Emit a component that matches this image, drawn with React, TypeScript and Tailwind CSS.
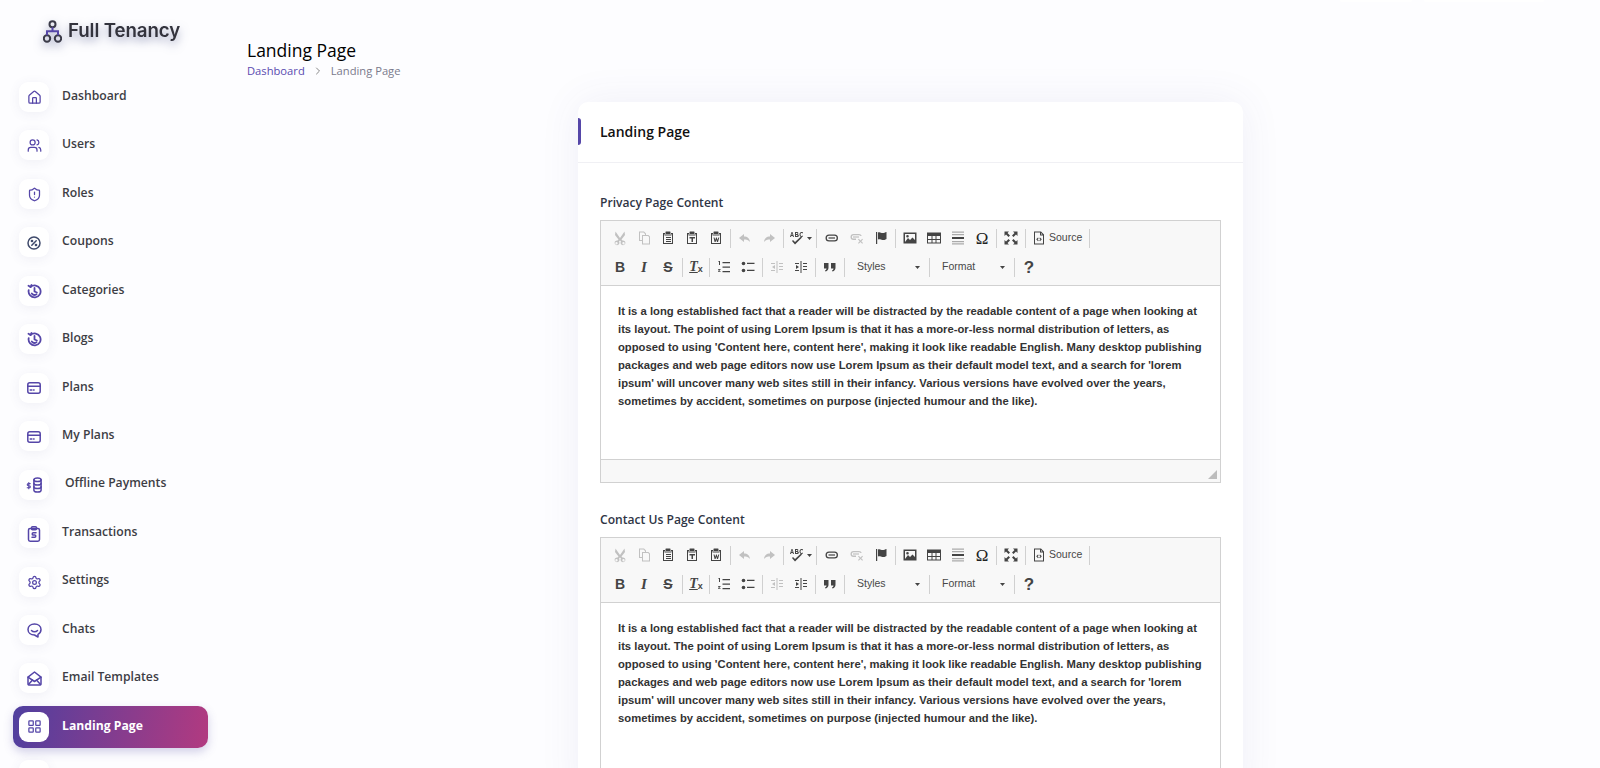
import React from "react";
import { Home, Users, ShieldAlert, Settings, LayoutGrid, ChevronRight } from "lucide-react";

const purple = "#5546a8";

const PercentIcon = () => (
  <svg width="14" height="14" viewBox="0 0 14 14" fill="none" stroke="#3f4a6b" strokeWidth="1.5" strokeLinecap="round">
    <circle cx="7" cy="7" r="6" />
    <path d="M9.200 4.800 4.800 9.200" />
    <circle cx="5" cy="5" r=".6" />
    <circle cx="9" cy="9" r=".6" />
  </svg>
);

const HistoryIcon = () => (
  <svg width="15" height="15" viewBox="0 0 15 15" fill="none" stroke={purple} strokeWidth="1.800" strokeLinecap="round" strokeLinejoin="round">
    <path d="M3.500 3a6 6 0 1 1-1.800 3.200" />
    <path d="M1.500 1.800 3.500 3 4.500 1" />
    <path d="M7.500 4v3.500l2.400 1" />
    <path d="M4.800 9.500c1 1.400 3 1.800 4.700.8" />
  </svg>
);

const CardIcon = () => (
  <svg width="14" height="12" viewBox="0 0 14 12" fill="none" stroke={purple} strokeWidth="1.500" strokeLinecap="round">
    <rect x=".8" y=".8" width="12.400" height="10.400" rx="2" />
    <path d="M.8 4.300h12.400" />
    <path d="M3.200 8h1.600M6.500 8h.6" />
  </svg>
);

const CoinsIcon = () => (
  <svg width="18" height="16" viewBox="0 0 18 16" fill="none" stroke={purple} strokeWidth="1.500" strokeLinecap="round">
    <ellipse cx="12.500" cy="2.800" rx="3.600" ry="1.800" />
    <path d="M8.900 2.800v10.400c0 1 1.600 1.800 3.600 1.800s3.600-.8 3.600-1.800V2.800" />
    <path d="M8.900 6.200c0 1 1.600 1.800 3.600 1.800s3.600-.8 3.600-1.800" />
    <path d="M8.900 9.700c0 1 1.600 1.800 3.600 1.800s3.600-.8 3.600-1.800" />
    <path d="M5.200 6.600H3.300a1 1 0 0 0 0 2.100h1a1 1 0 0 1 0 2.100H2.200M3.800 5.600v6.200" strokeWidth="1.100" />
  </svg>
);

const ClipboardDollar = () => (
  <svg width="14" height="16" viewBox="0 0 14 16" fill="none" stroke={purple} strokeWidth="1.500" strokeLinecap="round" strokeLinejoin="round">
    <rect x="1.500" y="2.500" width="11" height="12.700" rx="1.600" />
    <rect x="4.500" y=".8" width="5" height="3" rx="1" />
    <path d="M9 6.800H6.300a1.100 1.100 0 0 0 0 2.200h1.400a1.100 1.100 0 0 1 0 2.200H5" />
  </svg>
);

const ChatIcon = () => (
  <svg width="15" height="15" viewBox="0 0 15 15" fill="none" stroke={purple} strokeWidth="1.500" strokeLinecap="round" strokeLinejoin="round">
    <path d="M7.500 1C3.800 1 1 3.300 1 6.500S3.800 12 7.500 12l3.500 2v-2.700c1.900-1 3-2.700 3-4.800C14 3.300 11.200 1 7.500 1z" />
    <path d="M4.500 7.500c1.500 1.700 4.500 1.700 6 0" />
  </svg>
);

const MailIcon = () => (
  <svg width="15" height="15" viewBox="0 0 15 15" fill="none" stroke={purple} strokeWidth="1.500" strokeLinejoin="round" strokeLinecap="round">
    <path d="M1 6.200 7.500 1 14 6.200V13a1 1 0 0 1-1 1H2a1 1 0 0 1-1-1z" />
    <path d="M1 6.200 7.500 10.500 14 6.200" />
    <path d="M1.500 13.500 5.500 9M13.500 13.500 9.500 9" />
  </svg>
);

const icon = (I: typeof Home) => <I size={15} color={purple} strokeWidth={2} />;

const navItems: { label: string; icon: React.ReactNode; extra?: string }[] = [
  { label: "Dashboard", icon: icon(Home) },
  { label: "Users", icon: icon(Users) },
  { label: "Roles", icon: icon(ShieldAlert) },
  { label: "Coupons", icon: <PercentIcon /> },
  { label: "Categories", icon: <HistoryIcon /> },
  { label: "Blogs", icon: <HistoryIcon /> },
  { label: "Plans", icon: <CardIcon /> },
  { label: "My Plans", icon: <CardIcon /> },
  { label: "Offline Payments", icon: <CoinsIcon />, extra: "ml-[3px]" },
  { label: "Transactions", icon: <ClipboardDollar /> },
  { label: "Settings", icon: icon(Settings) },
  { label: "Chats", icon: <ChatIcon /> },
  { label: "Email Templates", icon: <MailIcon /> },
];

function NavRow({ label, icon, extra }: { label: string; icon: React.ReactNode; extra?: string }) {
  return (
    <div className="mb-[6.46px] flex h-[42px] items-center gap-[13px] pl-[6px]">
      <div className="flex h-[30px] w-[30px] items-center justify-center rounded-[9px] bg-white pt-[1px] shadow-[0_2px_12px_rgba(80,80,130,0.08)]">
        {icon}
      </div>
      <span className={`pb-[2px] text-[12.200px] font-semibold text-[#3d3d45] ${extra ?? ""}`}>{label}</span>
    </div>
  );
}

function Sidebar() {
  return (
    <aside className="w-[228px] shrink-0 font-['Open_Sans',sans-serif]">
      <div className="flex h-[76px] items-start pl-[43px] pt-[17px]">
        <div className="flex items-center gap-[6px] drop-shadow-[0_4px_5px_rgba(50,60,120,0.5)]">
          <svg width="19" height="23" viewBox="0 0 19 23" fill="none" stroke="#3a3a48" strokeWidth="2">
            <circle cx="9.500" cy="4.200" r="3" />
            <circle cx="4" cy="18.500" r="3.200" />
            <circle cx="15" cy="18.500" r="3.200" />
            <path d="M9.500 7.200v4M4 15.300v-4h11v4" stroke={purple} />
          </svg>
          <span className="font-['Inter',sans-serif] text-[18.700px] font-semibold tracking-[-0.1px] text-[#33333d]">Full Tenancy</span>
        </div>
      </div>
      <nav className="px-[13px]">
        {navItems.map((item) => (
          <NavRow key={item.label} {...item} />
        ))}
        <div className="mb-[6.46px] flex h-[42px] w-[195px] items-center gap-[13px] rounded-[10px] bg-[linear-gradient(100deg,#4f3f9f,#b23a80)] pl-[6px] shadow-[0_4px_10px_rgba(80,70,160,0.25)]">
          <div className="flex h-[30px] w-[30px] items-center justify-center rounded-[9px] bg-white">
            {icon(LayoutGrid)}
          </div>
          <span className="pb-[2px] text-[12.200px] font-bold text-white">Landing Page</span>
        </div>
        <div className="flex h-[42px] items-center pl-[6px]">
          <div className="h-[30px] w-[30px] rounded-[9px] bg-white shadow-[0_2px_12px_rgba(80,80,130,0.08)]" />
        </div>
      </nav>
    </aside>
  );
}

// ckeditor toolbar glyphs, drawn on a 16 grid
type G = { children: React.ReactNode; off?: boolean };
const Glyph = ({ children, off }: G) => (
  <svg width="16" height="16" viewBox="0 0 16 16" className={off ? "opacity-30" : ""} fill="#444" stroke="none">
    {children}
  </svg>
);

const Btn = ({ children, w = "w-[24px]" }: { children: React.ReactNode; w?: string }) => (
  <div className={`flex h-[24px] shrink-0 items-center justify-center ${w}`}>{children}</div>
);
const Sep = () => <div className="mx-[2px] h-[19px] w-px shrink-0 bg-[#d0d0d0]" />;

const Paste = ({ inner }: { inner: React.ReactNode }) => (
  <Glyph>
    <path d="M3 3h2v1.500h6V3h2v11H3zM4 4v9h8V4h-.500v1.500h-7V4z" />
    <rect x="5.500" y="1.500" width="5" height="2.500" rx=".5" />
    {inner}
  </Glyph>
);

function ToolbarRowOne() {
  return (
    <div className="flex h-[28px] items-center">
      <Btn>
        <Glyph off>
          <path d="M3.500 1.500 8 8l4.500-6.500L13 5 9.500 9.500l1 1a2.400 2.400 0 1 1-1.500 1L8 10.500l-1 1a2.400 2.400 0 1 1-1.500-1l1-1L3 5zM4.500 12a1.200 1.200 0 1 0 0 2.400 1.200 1.200 0 0 0 0-2.400zm7 0a1.200 1.200 0 1 0 0 2.400 1.200 1.200 0 0 0 0-2.400z" />
        </Glyph>
      </Btn>
      <Btn>
        <Glyph off>
          <path d="M3 1.500h5L10 3.500V5h2.500L14 6.500v8H6V11H3zM4 2.500V10h2V5h3V4L7.500 2.500zM7 6v7.500h6V7l-1-1z" />
        </Glyph>
      </Btn>
      <Btn>
        <Paste inner={<path d="M6 7h5v1H6zm0 2h5v1H6zm0 2h5v1H6z" />} />
      </Btn>
      <Btn>
        <Paste inner={<path d="M5.500 7h5.500v1.500h-2V12H7.500V8.500h-2z" />} />
      </Btn>
      <Btn>
        <Paste inner={<path d="M5.500 7.500h1l.8 2.500.7-2.500h.8l.7 2.500.8-2.500h1L10 12H9L8.300 9.800 7.600 12h-1z" />} />
      </Btn>
      <Sep />
      <Btn>
        <Glyph off>
          <path d="M7 4 2 8l5 4V9.500c2.500 0 4.500.5 6 2.500-.3-3.500-2.500-5.500-6-5.500z" />
        </Glyph>
      </Btn>
      <Btn>
        <Glyph off>
          <path d="m9 4 5 4-5 4V9.500c-2.500 0-4.500.5-6 2.500.3-3.500 2.500-5.500 6-5.500z" />
        </Glyph>
      </Btn>
      <Sep />
      <Btn w="w-[28px]">
        <div className="flex items-center gap-[2px]">
          <Glyph>
            <path d="M1 7 2.500 2h1L5 7H4l-.3-1H2.300L2 7zm1.500-2h1L3 3zM6 2h2a1.200 1.200 0 0 1 .8 2.200A1.300 1.300 0 0 1 8 7H6zm1 1v1h1a.5.5 0 0 0 0-1zm0 2v1h1a.5.5 0 0 0 0-1zM14 3.500c-.5-.8-2.500-.8-2.500 1s2 1.800 2.500 1v1c-2 1-3.500 0-3.500-2s1.500-3 3.500-2z" />
            <path d="M3 11l1-1 2 2 6-5.500 1 1L6 14.500z" />
          </Glyph>
          <svg width="5" height="3" viewBox="0 0 5 3"><path d="M0 0h5L2.500 3z" fill="#444" /></svg>
        </div>
      </Btn>
      <Sep />
      <Btn w="w-[26px]">
        <Glyph>
          <path d="M5 4.500h5.500a3.500 3.500 0 0 1 0 7H5a3.500 3.500 0 0 1 0-7zm0 1.300a2.200 2.200 0 0 0 0 4.400h5.500a2.200 2.200 0 0 0 0-4.400z" />
          <path d="M4.500 7.400h6.500v1.200H4.500z" />
        </Glyph>
      </Btn>
      <Btn>
        <Glyph off>
          <path d="M4.500 4H10a3 3 0 0 1 2.800 2h-1.300a1.700 1.700 0 0 0-1.500-.8H4.500a1.700 1.700 0 0 0 0 3.400H7V10H4.500a3 3 0 0 1 0-6z" />
          <path d="M4 6.400h6v1.200H4z" />
          <path d="m9 9.500.8-.8 1.700 1.700 1.700-1.700.8.8-1.700 1.700 1.700 1.700-.8.8-1.700-1.700-1.700 1.700-.8-.8 1.700-1.700z" />
        </Glyph>
      </Btn>
      <Btn>
        <Glyph>
          <path d="M3 2h1.200v12H3zM5 2.500c2-1 3 .5 4.500.5S12 2.500 13.500 2v7c-1.500 1-2.500 1-4 1S7 9 5 9.500z" />
        </Glyph>
      </Btn>
      <Sep />
      <Btn>
        <Glyph>
          <path d="M1.500 2.500h13v11h-13zM3 12l3-4 2 2 2.500-2.500L13 10V4H3zm2.500-7a1.300 1.300 0 1 1 0 2.600 1.300 1.300 0 0 1 0-2.600z" />
        </Glyph>
      </Btn>
      <Btn>
        <Glyph>
          <path d="M1 2.500h14v11H1zM2 6v3h3.500V6zm4.500 0v3h3V6zm4 0v3H14V6zM2 10v2.500h3.500V10zm4.500 0v2.500h3V10zm4 0v2.500H14V10z" />
        </Glyph>
      </Btn>
      <Btn>
        <Glyph>
          <path d="M2 1.500h12v1.200H2zM2 4h12v1.200H2z" fill="#aaa" />
          <path d="M2 7h12v2H2z" />
          <path d="M2 11h12v1.200H2zM2 13.300h12v1.200H2z" fill="#aaa" />
        </Glyph>
      </Btn>
      <Btn>
        <span className="font-['Liberation_Serif',serif] text-[17px] font-normal leading-none text-[#222]">Ω</span>
      </Btn>
      <Sep />
      <Btn>
        <Glyph>
          <path d="M1.500 1.500h4.500L4.500 3 7 5.500 5.500 7 3 4.500 1.500 6zM14.500 1.500V6L13 4.500 10.500 7 9 5.500 11.500 3 10 1.500zM1.500 14.500V10L3 11.500 5.500 9 7 10.500 4.500 13 6 14.500zM14.500 14.500H10l1.500-1.500L9 10.500 10.500 9l2.500 2.500 1.500-1.500z" />
        </Glyph>
      </Btn>
      <Sep />
      <div className="flex items-center gap-[2px] pl-[3px] pr-[5px]">
        <Glyph>
          <path d="M3 1.500h7L13 4.500v10H3zM4 2.500v11h8V5.500H9v-3zM10 3v1.500h1.500zM7 7.500l-1.800 1.800L7 11.200l.7-.7-1.100-1.200 1.100-1.100zm2 0-.7.7 1.100 1.100-1.100 1.200.7.700 1.800-1.900z" />
        </Glyph>
        <span className="text-[10.500px] text-[#474747]">Source</span>
      </div>
      <Sep />
    </div>
  );
}

const Combo = ({ label }: { label: string }) => (
  <div className="flex w-[80px] shrink-0 items-center justify-between pl-[10px] pr-[7px]">
    <span className="text-[10.500px] text-[#484848]">{label}</span>
    <svg width="5" height="3" viewBox="0 0 5 3"><path d="M0 0h5L2.500 3z" fill="#444" /></svg>
  </div>
);

function ToolbarRowTwo() {
  return (
    <div className="mt-[1px] flex h-[28px] items-center">
      <Btn>
        <span className="text-[14px] font-bold leading-none text-[#444]">B</span>
      </Btn>
      <Btn>
        <span className="font-['Liberation_Serif',serif] text-[15px] font-bold italic leading-none text-[#444]">I</span>
      </Btn>
      <Btn>
        <span className="text-[14px] font-bold leading-none text-[#444] line-through">S</span>
      </Btn>
      <Sep />
      <Btn w="w-[22px]">
        <span className="font-['Liberation_Serif',serif] text-[14px] font-bold italic leading-none text-[#444] underline">T</span>
        <span className="mt-1 text-[9px] font-bold leading-none text-[#444]">x</span>
      </Btn>
      <Sep />
      <Btn>
        <Glyph>
          <path d="M6.500 3H14v1.200H6.500zM6.500 7.500H14v1.200H6.500zM6.500 12H14v1.200H6.500z" />
          <path d="M3 2h1v4H3zM2 2.800 3 2v1zM2 10h2.500v.8L3 12h1.500v.8H2V12l1.500-1.200H2z" />
        </Glyph>
      </Btn>
      <Btn>
        <Glyph>
          <circle cx="3.500" cy="4.500" r="1.800" />
          <circle cx="3.500" cy="11.500" r="1.800" />
          <path d="M7 3.800h7.500V5H7zM7 10.800h7.500V12H7z" />
        </Glyph>
      </Btn>
      <Sep />
      <Btn>
        <Glyph off>
          <path d="M8.500 2v12h-1V2zM10 4h4v1h-4zM10 7h4v1h-4zM10 10h4v1h-4zM2 4h4v1H2zM2 11h4v1H2z" />
          <path d="M6 6v4L3 8z" />
        </Glyph>
      </Btn>
      <Btn>
        <Glyph>
          <path d="M8.500 2v12h-1V2zM2 4h4v1H2zM2 11h4v1H2zM10 4h4v1h-4zM10 7h4v1h-4zM10 10h4v1h-4z" />
          <path d="M3 6v4l3-2z" />
        </Glyph>
      </Btn>
      <Sep />
      <Btn>
        <Glyph>
          <path d="M2 4h4.500v4.500c0 2-1 3.500-3 4l-.6-1c1-.3 1.500-1 1.600-2H2zM9 4h4.500v4.500c0 2-1 3.500-3 4l-.6-1c1-.3 1.500-1 1.600-2H9z" />
        </Glyph>
      </Btn>
      <Sep />
      <Combo label="Styles" />
      <Sep />
      <Combo label="Format" />
      <Sep />
      <Btn>
        <span className="text-[17px] font-bold leading-none text-[#444]">?</span>
      </Btn>
    </div>
  );
}

const loremIpsum =
  "It is a long established fact that a reader will be distracted by the readable content of a page when looking at its layout. The point of using Lorem Ipsum is that it has a more-or-less normal distribution of letters, as opposed to using 'Content here, content here', making it look like readable English. Many desktop publishing packages and web page editors now use Lorem Ipsum as their default model text, and a search for 'lorem ipsum' will uncover many web sites still in their infancy. Various versions have evolved over the years, sometimes by accident, sometimes on purpose (injected humour and the like).";

function Editor() {
  return (
    <div className="border border-[#d1d1d1] font-['Liberation_Sans',Arial,sans-serif]">
      <div className="h-[65px] border-b border-[#d1d1d1] bg-[#f8f8f8] pl-[7px] pt-[3px]">
        <ToolbarRowOne />
        <ToolbarRowTwo />
      </div>
      <div className="h-[173px] bg-white pl-[17px] pr-[16px] pt-[16px] text-[11.250px] font-bold leading-[18px] text-[#333]">
        {loremIpsum}
      </div>
      <div className="flex h-[23px] items-end justify-end border-t border-[#d1d1d1] bg-[#f8f8f8] pb-[3px] pr-[3px]">
        <svg width="9" height="9" viewBox="0 0 9 9"><path d="M9 0v9H0z" fill="#bdbdbd" /></svg>
      </div>
    </div>
  );
}

export default function App() {
  return (
    <div className="flex h-[768px] overflow-hidden bg-[#fdfdff] font-['Open_Sans',sans-serif]">
      <Sidebar />
      <main className="flex-1 pl-[19px] pr-[26px]">
        <div className="flex h-[2px] justify-end gap-[12px] pr-[30px]">
          <div className="h-[2px] w-[72px] rounded-b-md bg-white" />
          <div className="h-[2px] w-[120px] rounded-b-md bg-white" />
        </div>
        <div className="pt-[36px]">
          <h1 className="text-[17.500px] leading-[24px] text-black">Landing Page</h1>
          <div className="flex items-center text-[11.200px] leading-[18px] text-[#7a7a8c]">
            <span className="text-[#5a4bb0]">Dashboard</span>
            <ChevronRight size={12} className="mx-[7px] text-[#888]" />
            <span>Landing Page</span>
          </div>
        </div>
        <section className="mx-auto mt-[22px] w-[665px] rounded-[10px] bg-white shadow-[0_0_40px_rgba(80,80,150,0.08)]">
          <div className="flex h-[61px] items-center border-b border-[#f0f0f4] pb-[1px]">
            <div className="h-[27px] w-[3px] rounded-r-sm bg-[#5546a8]" />
            <h2 className="ml-[19px] text-[14px] font-semibold text-[#111]">Landing Page</h2>
          </div>
          <div className="px-[22px] pt-[30px]">
            <div className="mb-[7px] text-[12.100px] font-semibold leading-[20px] text-[#2f3545]">Privacy Page Content</div>
            <Editor />
            <div className="mb-[7px] mt-[27px] text-[12.100px] font-semibold leading-[20px] text-[#2f3545]">Contact Us Page Content</div>
            <Editor />
          </div>
        </section>
      </main>
    </div>
  );
}
